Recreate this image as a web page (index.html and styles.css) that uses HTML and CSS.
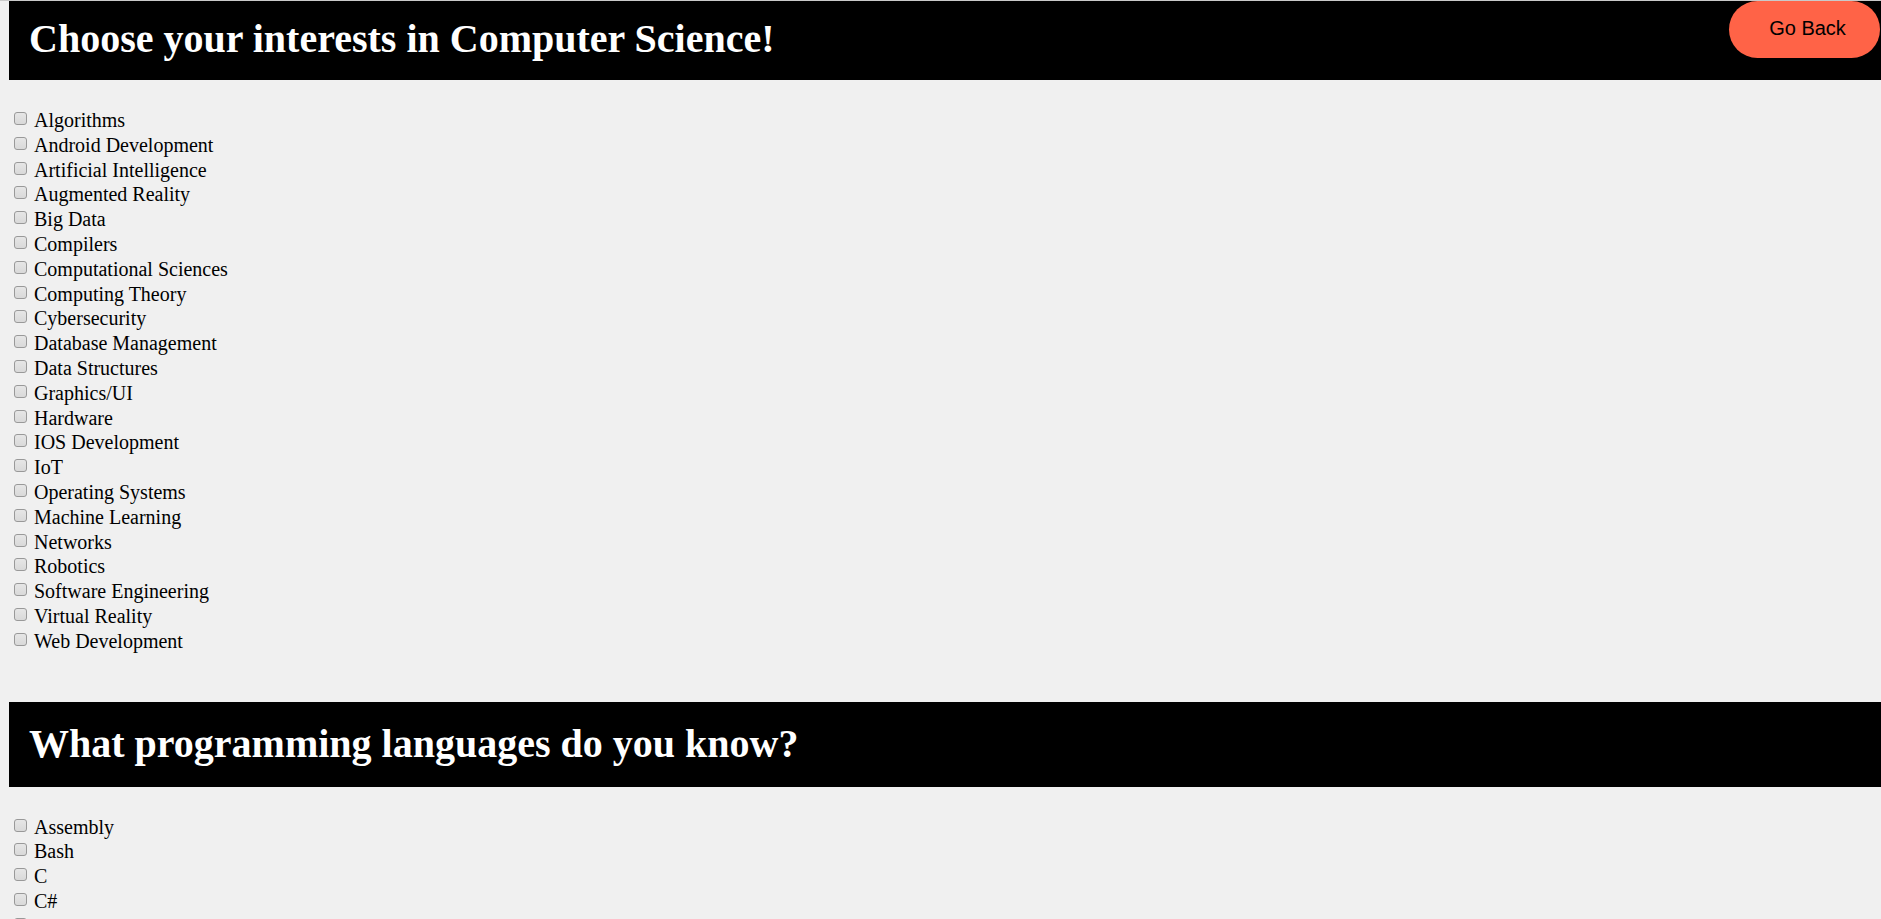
FILE: index.html
```html
<html>
<head>
<meta charset="UTF-8">
<title>Interests</title>
<link rel="stylesheet" href="styles.css">
</head>
<body>
	<div class="header first">
		<h1>Choose your interests in Computer Science!</h1>
		<button class="goBack" type="button">Go Back</button>
	</div>
	<form class="choices">
		<label class="item"><input type="checkbox" name="interest" value="algorithms">Algorithms</label>
		<label class="item"><input type="checkbox" name="interest" value="android">Android Development</label>
		<label class="item"><input type="checkbox" name="interest" value="ai">Artificial Intelligence</label>
		<label class="item"><input type="checkbox" name="interest" value="ar">Augmented Reality</label>
		<label class="item"><input type="checkbox" name="interest" value="bigdata">Big Data</label>
		<label class="item"><input type="checkbox" name="interest" value="compilers">Compilers</label>
		<label class="item"><input type="checkbox" name="interest" value="compsci">Computational Sciences</label>
		<label class="item"><input type="checkbox" name="interest" value="theory">Computing Theory</label>
		<label class="item"><input type="checkbox" name="interest" value="security">Cybersecurity</label>
		<label class="item"><input type="checkbox" name="interest" value="database">Database Management</label>
		<label class="item"><input type="checkbox" name="interest" value="ds">Data Structures</label>
		<label class="item"><input type="checkbox" name="interest" value="graphics">Graphics/UI</label>
		<label class="item"><input type="checkbox" name="interest" value="hardware">Hardware</label>
		<label class="item"><input type="checkbox" name="interest" value="ios">IOS Development</label>
		<label class="item"><input type="checkbox" name="interest" value="iot">IoT</label>
		<label class="item"><input type="checkbox" name="interest" value="os">Operating Systems</label>
		<label class="item"><input type="checkbox" name="interest" value="ml">Machine Learning</label>
		<label class="item"><input type="checkbox" name="interest" value="networks">Networks</label>
		<label class="item"><input type="checkbox" name="interest" value="robotics">Robotics</label>
		<label class="item"><input type="checkbox" name="interest" value="se">Software Engineering</label>
		<label class="item"><input type="checkbox" name="interest" value="vr">Virtual Reality</label>
		<label class="item"><input type="checkbox" name="interest" value="web">Web Development</label>
	</form>

	<div class="header second">
		<h1>What programming languages do you know?</h1>
	</div>
	<form class="choices">
		<label class="item"><input type="checkbox" name="lang" value="asm">Assembly</label>
		<label class="item"><input type="checkbox" name="lang" value="bash">Bash</label>
		<label class="item"><input type="checkbox" name="lang" value="c">C</label>
		<label class="item"><input type="checkbox" name="lang" value="csharp">C#</label>
		<label class="item"><input type="checkbox" name="lang" value="cpp">C++</label>
		<label class="item"><input type="checkbox" name="lang" value="go">Go</label>
		<label class="item"><input type="checkbox" name="lang" value="java">Java</label>
		<label class="item"><input type="checkbox" name="lang" value="js">JavaScript</label>
		<label class="item"><input type="checkbox" name="lang" value="python">Python</label>
	</form>
</body>
</html>
```

FILE: styles.css
```css
body{
	margin: 0;
	padding-left: 9px;
	border-top: 1px solid #c9c9c9;
	background-color: #f0f0f0;
	font-family: "Liberation Serif", "Times New Roman", serif;
	color: #000000;
}
.header{
	position: relative;
	background-color: #000000;
	color: #ffffff;
	padding-left: 20px;
}
.header h1{
	margin: 0;
	font-size: 40px;
	font-weight: bold;
	line-height: 46px;
}
.first{
	padding-top: 15px;
	padding-bottom: 18px;
}
.second{
	margin-top: 48px;
	padding-top: 19px;
	padding-bottom: 20px;
}
.goBack{
	position: absolute;
	top: 0;
	right: 1px;
	width: 151px;
	height: 57px;
	border: none;
	border-radius: 29px;
	background-color: tomato;
	color: #000000;
	font-family: "Liberation Sans", Arial, sans-serif;
	font-size: 20px;
	padding: 0 0 2px 6px;
}
.choices{
	margin: 28px 0 0 0;
	font-size: 20px;
}
.item{
	display: flex;
	align-items: flex-start;
	height: 24.8px;
	line-height: 24.8px;
}
.item input{
	appearance: none;
	-webkit-appearance: none;
	flex: none;
	width: 13px;
	height: 13px;
	margin: 4px 7px 0 5px;
	border: 1px solid #999999;
	border-radius: 3px;
	background: linear-gradient(#e6e6e6, #d9d9d9);
}
```
